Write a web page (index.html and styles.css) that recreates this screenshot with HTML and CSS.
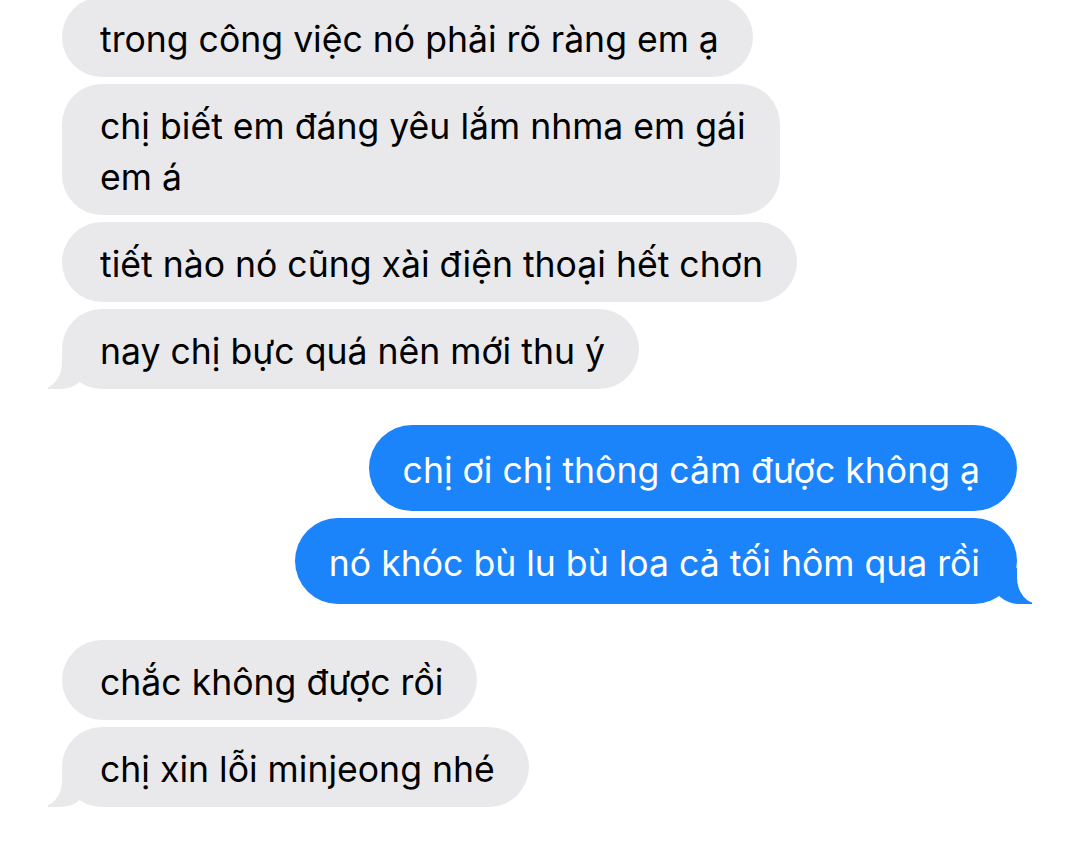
FILE: index.html
```html
<!DOCTYPE html>
<html lang="vi">
<head>
  <meta charset="UTF-8">
  <meta name="viewport" content="width=device-width, initial-scale=1.0">
  <title>Tin nhắn</title>
  <link rel="stylesheet" href="styles.css">
</head>
<body>
  <div class="chat">
    <div class="group them">
      <div class="bubble">trong công việc nó phải rõ ràng em ạ</div>
      <div class="bubble">chị biết em đáng yêu lắm nhma em gái<br>em á</div>
      <div class="bubble">tiết nào nó cũng xài điện thoại hết chơn</div>
      <div class="bubble tail">nay chị bực quá nên mới thu ý</div>
    </div>
    <div class="group me">
      <div class="bubble">chị ơi chị thông cảm được không ạ</div>
      <div class="bubble tail">nó khóc bù lu bù loa cả tối hôm qua rồi</div>
    </div>
    <div class="group them">
      <div class="bubble">chắc không được rồi</div>
      <div class="bubble tail">chị xin lỗi minjeong nhé</div>
    </div>
  </div>
</body>
</html>
```

FILE: styles.css
```css
body { margin: 0; background: #fff; font-family: Inter, "Noto Sans", sans-serif; }
.chat { display: flex; flex-direction: column; gap: 36px; padding: 0 63px 0 62px; margin-top: -3px; }
.group { display: flex; flex-direction: column; gap: 7px; }
.them { align-items: flex-start; }
.me { align-items: flex-end; }
.bubble { position: relative; font-size: 35.6px; line-height: 51px; padding: 17px 34px 12px 38px; border-radius: 40px; }
.them .bubble { background: #e9e9eb; color: #000; }
.me .bubble { background: #1b84fb; color: #fff; padding: 20px 37px 15px 34px; border-radius: 43px; }

/* tails */
.tail::before, .tail::after { content: ""; position: absolute; bottom: 0; height: 36px; }
.them .tail::before { left: -14px; width: 40px; background: #e9e9eb; border-bottom-right-radius: 28px 24px; }
.them .tail::after { left: -40px; width: 40px; background: #fff; border-bottom-right-radius: 22px 26px; }
.me .tail::before { right: -15px; width: 40px; background: #1b84fb; border-bottom-left-radius: 28px 24px; }
.me .tail::after { right: -40px; width: 40px; background: #fff; border-bottom-left-radius: 22px 26px; }
```
